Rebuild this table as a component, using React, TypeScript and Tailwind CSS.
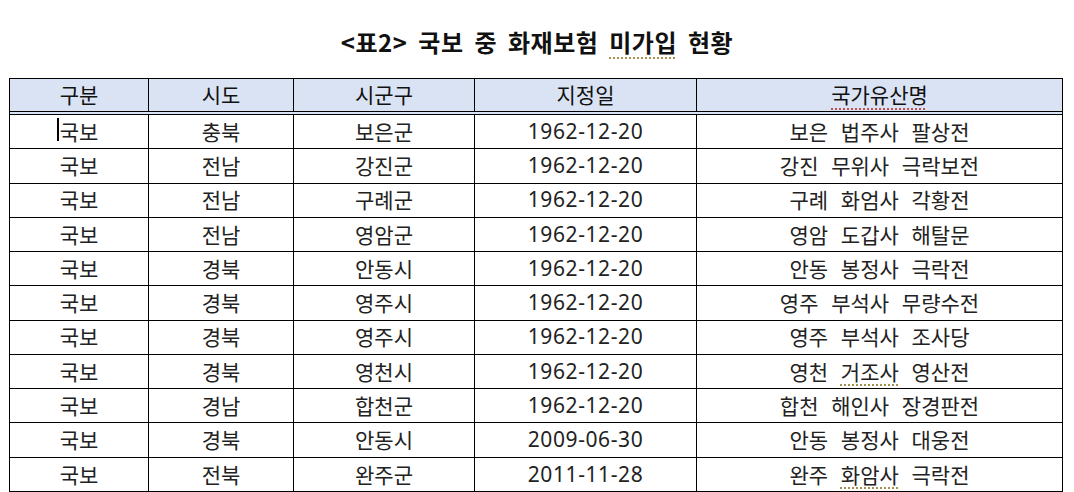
import React from "react";

type Row = {
  kind: string;
  sido: string;
  sigungu: string;
  date: string;
  name: React.ReactNode;
};

const squiggle =
  "underline decoration-dotted decoration-[1.5px] underline-offset-[5px]";

const rows: Row[] = [
  { kind: "국보", sido: "충북", sigungu: "보은군", date: "1962-12-20", name: "보은 법주사 팔상전" },
  { kind: "국보", sido: "전남", sigungu: "강진군", date: "1962-12-20", name: "강진 무위사 극락보전" },
  { kind: "국보", sido: "전남", sigungu: "구례군", date: "1962-12-20", name: "구례 화엄사 각황전" },
  { kind: "국보", sido: "전남", sigungu: "영암군", date: "1962-12-20", name: "영암 도갑사 해탈문" },
  { kind: "국보", sido: "경북", sigungu: "안동시", date: "1962-12-20", name: "안동 봉정사 극락전" },
  { kind: "국보", sido: "경북", sigungu: "영주시", date: "1962-12-20", name: "영주 부석사 무량수전" },
  { kind: "국보", sido: "경북", sigungu: "영주시", date: "1962-12-20", name: "영주 부석사 조사당" },
  {
    kind: "국보",
    sido: "경북",
    sigungu: "영천시",
    date: "1962-12-20",
    name: (
      <>
        영천 <span className={`${squiggle} decoration-[#a89050]`}>거조사</span> 영산전
      </>
    ),
  },
  { kind: "국보", sido: "경남", sigungu: "합천군", date: "1962-12-20", name: "합천 해인사 장경판전" },
  { kind: "국보", sido: "경북", sigungu: "안동시", date: "2009-06-30", name: "안동 봉정사 대웅전" },
  {
    kind: "국보",
    sido: "전북",
    sigungu: "완주군",
    date: "2011-11-28",
    name: (
      <>
        완주 <span className={`${squiggle} decoration-[#a89050]`}>화암사</span> 극락전
      </>
    ),
  },
];

const cols = "grid grid-cols-[139px_145px_181px_222px_365px]";
const cell = "flex items-center justify-center border-r border-black";

export default function App() {
  return (
    <div
      className="w-[1074px] h-[492px] bg-white text-[#111] overflow-hidden"
      style={{ fontFamily: '"Noto Sans CJK KR", "Noto Sans", sans-serif' }}
    >
      {/* Title */}
      <div className="h-[78px] pt-[6px] flex items-center justify-center">
        <h1 className="text-[24px] font-bold [word-spacing:5px] tracking-[0.5px]">
          &lt;표2&gt; 국보 중 화재보험{" "}
          <span className={`${squiggle} decoration-[#a89050]`}>미가입</span> 현황
        </h1>
      </div>

      {/* Table */}
      <div className="ml-[9px] w-[1054px] border border-black">
        <div className={`${cols} h-[36px] bg-[#dae3f3] border-b-4 border-double border-black text-[21px]`}>
          <div className={cell}>구분</div>
          <div className={cell}>시도</div>
          <div className={cell}>시군구</div>
          <div className={cell}>지정일</div>
          <div className="flex items-center justify-center">
            <span className={`${squiggle} decoration-[#c0504d]`}>국가유산명</span>
          </div>
        </div>

        <div className="h-[376px] flex flex-col text-[21px] text-[#222]">
          {rows.map((r, i) => (
            <div
              key={i}
              className={`${cols} flex-1 ${i < rows.length - 1 ? "border-b border-black" : ""}`}
            >
              <div className={cell}>
                <span className="relative">
                  {i === 0 && (
                    <span className="absolute left-[-3px] top-[2px] w-[2px] h-[23px] bg-black" />
                  )}
                  {r.kind}
                </span>
              </div>
              <div className={cell}>{r.sido}</div>
              <div className={cell}>{r.sigungu}</div>
              <div className={`${cell} [font-family:'Noto_Sans',sans-serif] text-[21px] tracking-[0.6px]`}>
                {r.date}
              </div>
              <div className="flex items-center justify-center">
                <span className="[word-spacing:8px]">{r.name}</span>
              </div>
            </div>
          ))}
        </div>
      </div>
    </div>
  );
}
